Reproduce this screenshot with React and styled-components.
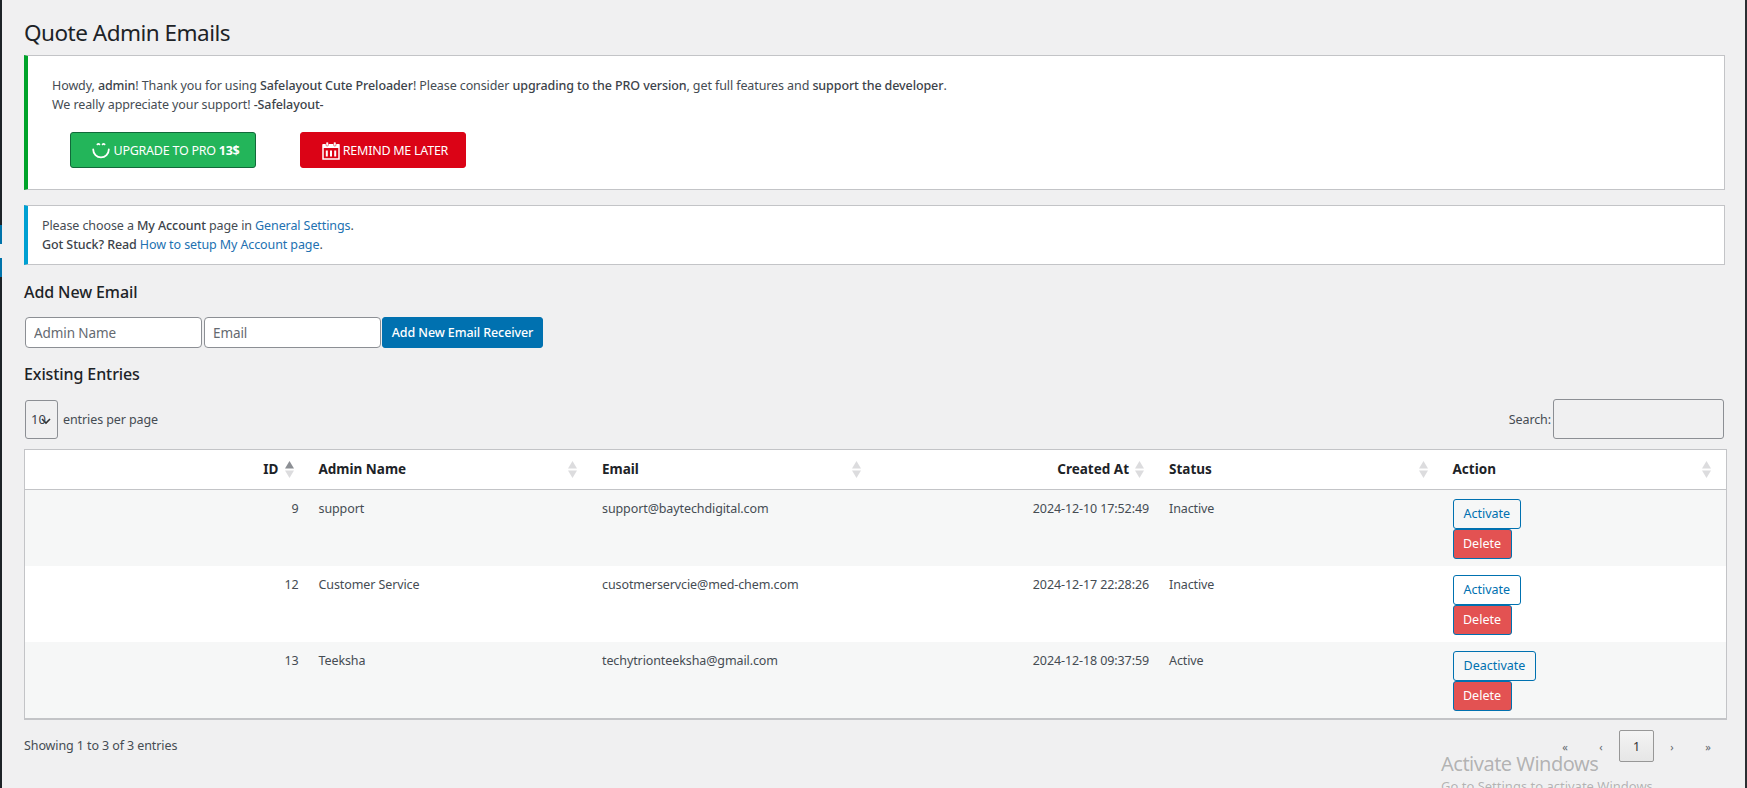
import React from 'react'
import styled, { createGlobalStyle } from 'styled-components'

const GlobalStyle = createGlobalStyle`
  html, body {
    margin: 0;
    padding: 0;
    height: 788px;
    overflow: hidden;
    background: #f0f0f1;
  }
  body {
    font-family: "Noto Sans", "Open Sans", sans-serif;
    font-size: 12.5px;
    line-height: 19px;
    color: #454c53;
    letter-spacing: -0.1px;
  }
  * { box-sizing: border-box; }
`

const Page = styled.div`
  display: flex;
  height: 788px;
  position: relative;
  overflow: hidden;
`

const AdminEdge = styled.div`
  width: 2px;
  flex: none;
  background: #1d2327;
  padding-top: 225px;
`

const MenuMark = styled.div`
  height: 19px;
  background: #0073aa;
`

const MenuGap = styled.div`
  height: 14px;
  background: #f0f0f1;
`

const ScrollEdge = styled.div`
  width: 2px;
  flex: none;
  background: #2b2f33;
`

const Main = styled.main`
  flex: 1;
  min-width: 0;
  padding: 0 18px 0 22px;
`

const Title = styled.h1`
  margin: 0;
  padding-top: 18px;
  font-size: 22.5px;
  line-height: 29px;
  font-weight: 400;
  color: #1d2327;
  letter-spacing: -0.5px;
`

const PromoNotice = styled.div`
  margin: 8px 2px 0 0;
  height: 135px;
  background: #fff;
  border: 1px solid #c3c4c7;
  border-left: 4px solid #00a32a;
  padding: 20px 0 0 24px;
`

const NoticeLine = styled.p`
  margin: 0;
  strong { font-weight: 500; color: #3c434a; }
`

const PromoActions = styled.div`
  display: flex;
  gap: 44px;
  margin: 18px 0 0 18px;
`

const PromoButton = styled.a`
  display: flex;
  align-items: center;
  justify-content: center;
  gap: 3px;
  height: 36px;
  width: ${props => props.w}px;
  padding-left: 4px;
  border-radius: 3px;
  color: #fff;
  font-size: 12.5px;
  letter-spacing: -0.25px;
  background: ${props => props.bg};
  border: 1px solid ${props => props.edge};
  strong { font-weight: 700; }
`

const InfoNotice = styled.div`
  margin: 15px 2px 0 0;
  height: 60px;
  background: #fff;
  border: 1px solid #c3c4c7;
  border-left: 4px solid #00a0d2;
  padding: 10px 0 0 14px;
`

const NoticeLink = styled.a`
  color: #2271b1;
`

const SectionTitle = styled.h2`
  margin: ${props => props.top}px 0 0;
  font-size: 16px;
  line-height: 22px;
  font-weight: 500;
  color: #1d2327;
  letter-spacing: -0.1px;
`

const AddForm = styled.form`
  display: flex;
  margin: 14px 0 0 1px;
  gap: 2px;
`

const TextInput = styled.input`
  width: 177px;
  height: 31px;
  border: 1px solid #8c8f94;
  border-radius: 4px;
  background: #fff;
  padding: 0 8px;
  font: inherit;
  font-size: 13.5px;
  letter-spacing: -0.1px;
  &::placeholder { color: #646970; opacity: 1; }
`

const PrimaryButton = styled.button`
  width: 161px;
  height: 31px;
  border: 1px solid #0071b0;
  border-radius: 3px;
  background: #0071b0;
  color: #fff;
  font: inherit;
  font-size: 12.5px;
  letter-spacing: -0.1px;
  font-weight: 500;
  padding: 0;
  margin-left: -1px;
`

const TableControls = styled.div`
  display: flex;
  justify-content: space-between;
  align-items: center;
  margin: 14px 0 0 1px;
  padding-right: 3px;
`

const LengthControl = styled.label`
  display: flex;
  align-items: center;
  gap: 5px;
`

const LengthSelect = styled.select`
  appearance: none;
  width: 33px;
  height: 39px;
  border: 1px solid #8c8f94;
  border-radius: 3px;
  padding: 0 0 0 5px;
  font: inherit;
  font-size: 13px;
  color: #3c434a;
  background: #f0f0f1 url('data:image/svg+xml;utf8,<svg xmlns="http://www.w3.org/2000/svg" width="10" height="10"><path d="M1 3l4 4 4-4" fill="none" stroke="%23333" stroke-width="1.6"/></svg>') no-repeat 15px 15px;
`

const SearchControl = styled.label`
  display: flex;
  align-items: center;
  gap: 2px;
`

const SearchInput = styled.input`
  width: 171px;
  height: 40px;
  border: 1px solid #8c8f94;
  border-radius: 3px;
  background: #f0f0f1;
`

const EntriesTable = styled.table`
  width: 100%;
  margin-top: 10px;
  table-layout: fixed;
  border-collapse: separate;
  border-spacing: 0;
  background: #fff;
  border: 1px solid #c3c4c7;
  border-bottom-width: 2px;
`

const HeadCell = styled.th`
  position: relative;
  height: 40px;
  padding: 0 30px 0 10px;
  font-size: 13.5px;
  letter-spacing: 0;
  font-weight: 700;
  color: #1d2327;
  text-align: ${props => (props.$right ? 'right' : 'left')};
  border-bottom: 1px solid #c3c4c7;
`

const SortMark = styled.svg`
  position: absolute;
  right: 15px;
  top: 11px;
  width: 9px;
  height: 17px;
`

const Row = styled.tr`
  background: ${props => (props.$odd ? '#f6f7f7' : '#fff')};
`

const Cell = styled.td`
  height: 76px;
  padding: 8.5px 10px 7.5px;
  vertical-align: top;
  text-align: ${props => (props.$right ? 'right' : 'left')};
`

const ActionStack = styled.div`
  display: flex;
  flex-direction: column;
  align-items: flex-start;
`

const OutlineButton = styled.button`
  height: 30px;
  padding: 0 10px;
  border: 1px solid #0071b0;
  border-radius: 3px;
  background: transparent;
  color: #0071b0;
  font: inherit;
  font-size: 12.5px;
`

const DeleteButton = styled.button`
  height: 30px;
  width: 59px;
  padding: 0;
  border: 1px solid #0071b0;
  border-radius: 3px;
  background: #e35252;
  color: #fff;
  font: inherit;
  font-size: 12.5px;
`

const TableFooter = styled.div`
  display: flex;
  justify-content: space-between;
  align-items: flex-start;
  margin-top: 10px;
`

const ShowingText = styled.div`
  margin-top: 6px;
`

const Pager = styled.nav`
  display: flex;
  align-items: center;
  margin-right: 1px;
`

const PagerArrow = styled.span`
  width: 36px;
  text-align: center;
  font-size: 11px;
  color: #646970;
`

const PagerCurrent = styled.span`
  width: 35px;
  height: 32px;
  display: flex;
  align-items: center;
  justify-content: center;
  border: 1px solid #979797;
  border-radius: 2px;
  color: #333;
  background: linear-gradient(#f4f4f4, #e6e6e6);
`

const Watermark = styled.div`
  position: absolute;
  left: 1441px;
  top: 750px;
  color: rgba(90, 90, 90, 0.42);
  font-family: "Noto Sans", sans-serif;
  letter-spacing: -0.5px;
  pointer-events: none;
  div:first-child { font-size: 20px; line-height: 27px; }
  div:last-child { font-size: 13px; line-height: 18px; letter-spacing: 0; }
`

const SmileIcon = () => (
  <svg width="20" height="20" viewBox="0 0 20 20" fill="none">
    <path d="M2.2 9.5a7.8 7.8 0 0 0 15.6 0" stroke="#fff" strokeWidth="1.8" strokeLinecap="round" />
    <path d="M6.4 4.4q1-1 2 0M11.6 4.4q1-1 2 0" stroke="#fff" strokeWidth="1.8" strokeLinecap="round" />
  </svg>
)

const CalendarIcon = () => (
  <svg width="18" height="19" viewBox="0 0 18 19" fill="none">
    <rect x="1" y="4" width="16" height="14" stroke="#fff" strokeWidth="1.5" />
    <rect x="1" y="3" width="16" height="4" fill="#fff" />
    <rect x="4" y="1" width="2.4" height="4" rx="1" fill="#fff" stroke="#db0316" strokeWidth=".5" />
    <rect x="11.6" y="1" width="2.4" height="4" rx="1" fill="#fff" stroke="#db0316" strokeWidth=".5" />
    <path d="M4.8 9.5v6M9 9.5v6M13.2 9.5v6" stroke="#fff" strokeWidth="2" />
  </svg>
)

const Sort = ({ active }) => (
  <SortMark viewBox="0 0 9 17">
    <path d="M4.5 0L9 7.5H0z" fill={active ? '#8c8f94' : '#dcdcde'} />
    <path d="M4.5 17L0 9.5h9z" fill="#dcdcde" />
  </SortMark>
)

const columns = [
  { label: 'ID', right: true, active: true },
  { label: 'Admin Name' },
  { label: 'Email' },
  { label: 'Created At', right: true },
  { label: 'Status' },
  { label: 'Action' },
]

const entries = [
  { id: 9, name: 'support', email: 'support@baytechdigital.com', created: '2024-12-10 17:52:49', status: 'Inactive', toggle: 'Activate' },
  { id: 12, name: 'Customer Service', email: 'cusotmerservcie@med-chem.com', created: '2024-12-17 22:28:26', status: 'Inactive', toggle: 'Activate' },
  { id: 13, name: 'Teeksha', email: 'techytrionteeksha@gmail.com', created: '2024-12-18 09:37:59', status: 'Active', toggle: 'Deactivate' },
]

export default function App() {
  return (
    <Page>
      <GlobalStyle />
      <AdminEdge>
        <MenuMark />
        <MenuGap />
        <MenuMark />
      </AdminEdge>
      <Main>
        <Title>Quote Admin Emails</Title>

        <PromoNotice>
          <NoticeLine>
            Howdy, <strong>admin</strong>! Thank you for using <strong>Safelayout Cute Preloader</strong>! Please consider <strong>upgrading to the PRO version</strong>, get full features and <strong>support the developer</strong>.
          </NoticeLine>
          <NoticeLine>
            We really appreciate your support! <strong>-Safelayout-</strong>
          </NoticeLine>
          <PromoActions>
            <PromoButton w={186} bg="#23b55a" edge="#12693a">
              <SmileIcon />
              <span>UPGRADE TO PRO <strong>13$</strong></span>
            </PromoButton>
            <PromoButton w={166} bg="#db0316" edge="#db0316">
              <CalendarIcon />
              <span>REMIND ME LATER</span>
            </PromoButton>
          </PromoActions>
        </PromoNotice>

        <InfoNotice>
          <NoticeLine>
            Please choose a <strong>My Account</strong> page in <NoticeLink>General Settings</NoticeLink>.
          </NoticeLine>
          <NoticeLine>
            <strong>Got Stuck? Read</strong> <NoticeLink>How to setup My Account page</NoticeLink>.
          </NoticeLine>
        </InfoNotice>

        <SectionTitle top={16}>Add New Email</SectionTitle>
        <AddForm>
          <TextInput placeholder="Admin Name" />
          <TextInput placeholder="Email" />
          <PrimaryButton type="button">Add New Email Receiver</PrimaryButton>
        </AddForm>

        <SectionTitle top={15}>Existing Entries</SectionTitle>
        <TableControls>
          <LengthControl>
            <LengthSelect defaultValue="10">
              <option>10</option>
            </LengthSelect>
            entries per page
          </LengthControl>
          <SearchControl>
            Search:
            <SearchInput />
          </SearchControl>
        </TableControls>

        <EntriesTable>
          <thead>
            <tr>
              {columns.map(col => (
                <HeadCell key={col.label} $right={col.right}>
                  {col.label}
                  <Sort active={col.active} />
                </HeadCell>
              ))}
            </tr>
          </thead>
          <tbody>
            {entries.map((entry, i) => (
              <Row key={entry.id} $odd={i % 2 === 0}>
                <Cell $right>{entry.id}</Cell>
                <Cell>{entry.name}</Cell>
                <Cell>{entry.email}</Cell>
                <Cell $right>{entry.created}</Cell>
                <Cell>{entry.status}</Cell>
                <Cell>
                  <ActionStack>
                    <OutlineButton>{entry.toggle}</OutlineButton>
                    <DeleteButton>Delete</DeleteButton>
                  </ActionStack>
                </Cell>
              </Row>
            ))}
          </tbody>
        </EntriesTable>

        <TableFooter>
          <ShowingText>Showing 1 to 3 of 3 entries</ShowingText>
          <Pager>
            <PagerArrow>«</PagerArrow>
            <PagerArrow>‹</PagerArrow>
            <PagerCurrent>1</PagerCurrent>
            <PagerArrow>›</PagerArrow>
            <PagerArrow>»</PagerArrow>
          </Pager>
        </TableFooter>
      </Main>
      <ScrollEdge />
      <Watermark>
        <div>Activate Windows</div>
        <div>Go to Settings to activate Windows.</div>
      </Watermark>
    </Page>
  )
}
